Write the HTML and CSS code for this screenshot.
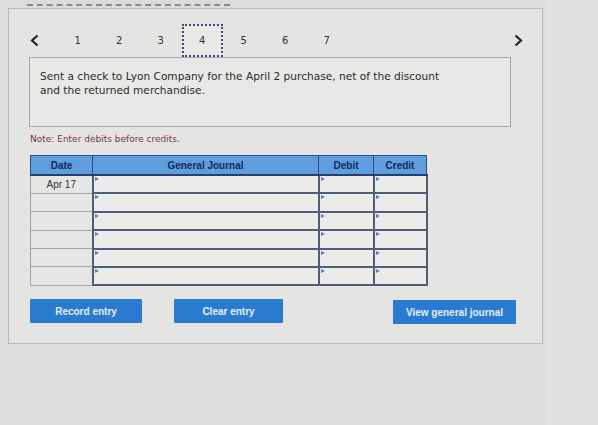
FILE: index.html
```html
<!DOCTYPE html>
<html>
<head>
<meta charset="utf-8">
<link rel="stylesheet" href="styles.css">
</head>
<body>
<div class="cutline"></div>
<div class="panel">
  <nav class="nav">
    <span class="arrow"><svg width="9" height="13" viewBox="0 0 9 13"><polyline points="7.5,1.5 2,6.5 7.5,11.5" fill="none" stroke="#222" stroke-width="2.2"/></svg></span>
    <span class="num">1</span>
    <span class="num">2</span>
    <span class="num">3</span>
    <span class="num current">4</span>
    <span class="num">5</span>
    <span class="num">6</span>
    <span class="num">7</span>
    <span class="arrow next"><svg width="9" height="13" viewBox="0 0 9 13"><polyline points="1.5,1.5 7,6.5 1.5,11.5" fill="none" stroke="#222" stroke-width="2.2"/></svg></span>
  </nav>
  <div class="question">Sent a check to Lyon Company for the April 2 purchase, net of the discount and the returned merchandise.</div>
  <p class="note">Note: Enter debits before credits.</p>
  <table class="journal">
    <thead>
      <tr><th class="c-date">Date</th><th class="c-gj">General Journal</th><th class="c-dr">Debit</th><th class="c-cr">Credit</th></tr>
    </thead>
    <tbody>
      <tr><td class="date">Apr 17</td><td class="in"></td><td class="in"></td><td class="in"></td></tr>
      <tr><td class="date"></td><td class="in"></td><td class="in"></td><td class="in"></td></tr>
      <tr><td class="date"></td><td class="in"></td><td class="in"></td><td class="in"></td></tr>
      <tr><td class="date"></td><td class="in"></td><td class="in"></td><td class="in"></td></tr>
      <tr><td class="date"></td><td class="in"></td><td class="in"></td><td class="in"></td></tr>
      <tr><td class="date"></td><td class="in"></td><td class="in"></td><td class="in"></td></tr>
    </tbody>
  </table>
  <div class="actions">
    <button class="btn b-record">Record entry</button>
    <button class="btn b-clear">Clear entry</button>
    <button class="btn b-view">View general journal</button>
  </div>
</div>
</body>
</html>
```
FILE: styles.css
```css
html, body {
  margin: 0;
  padding: 0;
}
body {
  width: 598px;
  height: 425px;
  background: linear-gradient(90deg, #dcdcda 0, #dcdcda 545px, #e2e2e0 545px);
  font-family: "DejaVu Sans", Verdana, sans-serif;
  overflow: hidden;
}
.cutline {
  margin: 4px 0 0 27px;
  width: 203px;
  border-top: 2px dashed #8a8a88;
  height: 0;
}
.panel {
  box-sizing: border-box;
  margin: 2px 0 0 8px;
  width: 535px;
  height: 336px;
  border: 1px solid #b9b9b7;
  background: #e4e4e2;
}
.nav {
  display: flex;
  align-items: center;
  height: 33px;
  margin-top: 15px;
  padding-left: 3px;
  padding-right: 12px;
}
.arrow {
  width: 45px;
  height: 33px;
  display: flex;
  align-items: center;
  justify-content: center;
}
.arrow.next {
  margin-left: auto;
  width: 24px;
}
.num {
  box-sizing: border-box;
  width: 41.5px;
  height: 33px;
  display: flex;
  align-items: center;
  justify-content: center;
  font-size: 10px;
  color: #333;
}
.num.current {
  border: 2px dotted #3a4a80;
  background: #e9e9e7;
}
.question {
  box-sizing: border-box;
  margin-left: 20px;
  width: 482px;
  height: 70px;
  border: 1px solid #a6a6a4;
  background: #e8e8e6;
  padding: 11px 60px 0 10px;
  font-size: 10.6px;
  line-height: 14px;
  color: #2b2b2b;
}
.note {
  margin: 7px 0 0 21px;
  font-size: 9px;
  line-height: 11px;
  color: #7f3438;
}
.journal {
  margin: 10px 0 0 21px;
  border-collapse: collapse;
  table-layout: fixed;
  width: 392px;
  font-family: "Liberation Sans", Arial, sans-serif;
  font-size: 10px;
}
.journal th {
  height: 18px;
  padding: 0;
  background: #5f9edc;
  color: #14295a;
  font-weight: bold;
  border: 1px solid #2f4a80;
  border-bottom: 2px solid #24406f;
}
.c-date { width: 61px; }
.c-gj { width: 225px; }
.c-dr { width: 54px; }
.c-cr { width: 52px; }
.journal td {
  height: 16.4px;
  padding: 0;
}
.journal td.date {
  border: 1px solid #a4a4a4;
  background: #e6e6e4;
  text-align: center;
  color: #333;
}
.journal td.in {
  position: relative;
  border: 2px solid #505d78;
  background: #ebebe9;
}
.journal td.in::before {
  content: "";
  position: absolute;
  left: 1px;
  top: 1px;
  border-left: 4px solid #5a7cc0;
  border-top: 2.5px solid transparent;
  border-bottom: 2.5px solid transparent;
}
.actions {
  display: flex;
  margin: 13px 0 0 21px;
}
.btn {
  height: 24px;
  border: none;
  border-radius: 1px;
  background: #2a7bd0;
  color: #e6edf7;
  font-family: "Liberation Sans", Arial, sans-serif;
  font-weight: bold;
  font-size: 10px;
  padding: 0;
}
.b-record { width: 112px; }
.b-clear { width: 109px; margin-left: 32px; }
.b-view { width: 123px; margin-left: 110px; margin-top: 1px; }
```
